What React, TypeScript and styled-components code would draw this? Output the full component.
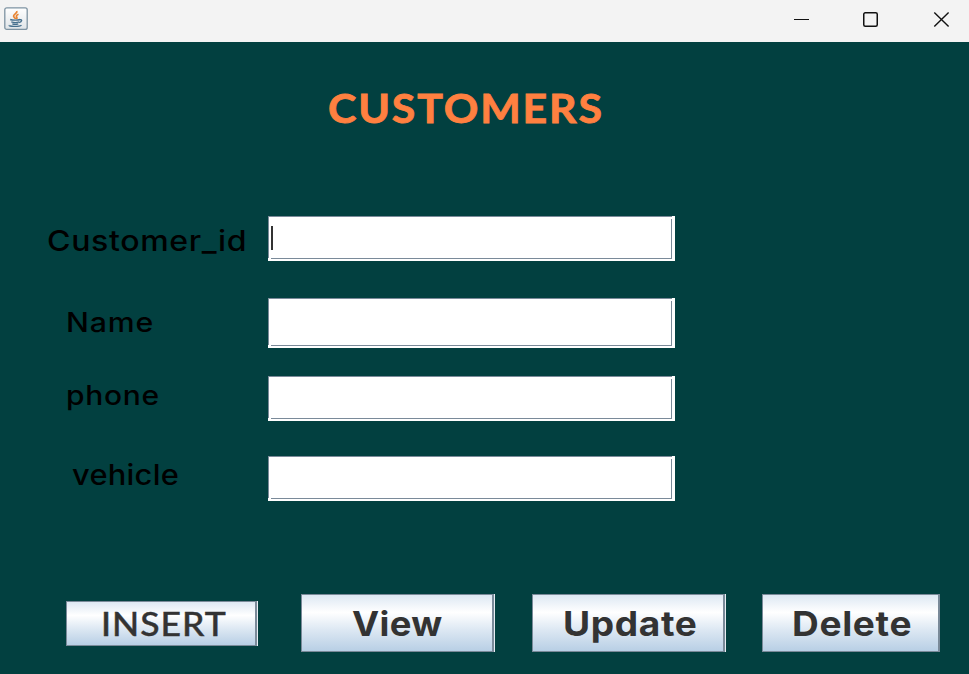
import React from 'react';
import styled, { createGlobalStyle } from 'styled-components';

const GlobalStyle = createGlobalStyle`
  * { box-sizing: border-box; }
  body { margin: 0; background: #024040; overflow: hidden; }
`;

const Window = styled.div`
  width: 969px;
  height: 674px;
  display: flex;
  flex-direction: column;
  background: #024040;
`;

const TitleBar = styled.header`
  height: 42px;
  flex: none;
  display: flex;
  justify-content: space-between;
  background: #f3f3f3;
`;

const AppIcon = styled.svg`
  width: 24px;
  height: 24px;
  margin: 7px 0 0 4px;
`;

const WindowControls = styled.div`
  display: flex;
  gap: 54px;
  padding: 11px 20px 0 0;
`;

const ControlIcon = styled.svg`
  width: 16px;
  height: 17px;
  overflow: visible;
  fill: none;
  stroke: #111;
`;

const Body = styled.main`
  flex: 1;
  display: flex;
  flex-direction: column;
`;

interface TypeProps {
  $size: number;
  $spacing: number;
  $stretch: number;
}

const Type = styled.span<TypeProps>`
  display: inline-block;
  white-space: nowrap;
  font-size: ${p => p.$size}px;
  letter-spacing: ${p => p.$spacing}px;
  transform: scaleX(${p => p.$stretch});
  transform-origin: left center;
`;

const Heading = styled.h1`
  height: 60px;
  margin: 36px 0 0 327.5px;
  font: 700 40px/60px Lato, sans-serif;
  color: #ff8040;
  -webkit-text-stroke: 0.8px #ff8040;
`;

const Form = styled.form`
  display: flex;
  flex-direction: column;
  margin-top: 78px;
`;

const FormRow = styled.div<{ $gap: number }>`
  display: grid;
  grid-template-columns: 268px 407px;
  align-items: start;
  margin-bottom: ${p => p.$gap}px;
`;

const Label = styled.label<{ $indent: number; $drop: number }>`
  padding-left: ${p => p.$indent}px;
  margin-top: ${p => p.$drop}px;
  height: 40px;
  font: 450 28px/40px Inter, sans-serif;
  color: #000;
`;

const Field = styled.div<{ $height: number }>`
  height: ${p => p.$height}px;
  display: grid;
  grid-template-columns: 1px 2px 1fr 1px 3px;
  grid-template-rows: 1px 2px 1fr 1px 2px;
  background: #fff;
`;

const TopEdge = styled.i`
  grid-area: 1 / 1 / 2 / 5;
  background: #7a8a99;
`;
const LeftEdge = styled.i`
  grid-area: 1 / 1 / 4 / 2;
  background: #7a8a99;
`;
const RightEdge = styled.i`
  grid-area: 3 / 4 / 5 / 5;
  background: #7a8a99;
`;
const BottomEdge = styled.i`
  grid-area: 4 / 3 / 5 / 5;
  background: #7a8a99;
`;
const Caret = styled.i`
  grid-area: 3 / 3 / 4 / 4;
  width: 2px;
  height: 24px;
  margin-top: 7px;
  background: #333;
`;

const Actions = styled.div`
  display: flex;
  align-items: center;
  margin: 93px 0 0 66px;
`;

const Button = styled.button<{
  $width: number;
  $height: number;
  $after: number;
  $indent: number;
  $regular?: boolean;
  $flush?: boolean;
}>`
  width: ${p => p.$width}px;
  height: ${p => p.$height}px;
  margin: 0 ${p => p.$after}px 0 0;
  padding: ${p => (p.$regular ? 2 : 8)}px 0 0 ${p => p.$indent}px;
  border: 1px solid #7a8a99;
  border-right-width: 2px;
  border-radius: 0;
  box-shadow: ${p => (p.$flush ? 'none' : '1px 0 0 #e8eef4')};
  background: linear-gradient(#dde8f3 0%, #fff 31%, #dde8f3 62%, #b8cfe5 100%);
  background-clip: padding-box;
  text-align: left;
  color: #333;
  font-family: ${p => (p.$regular ? 'Lato' : 'Inter')}, sans-serif;
  font-weight: ${p => (p.$regular ? 500 : 700)};
  line-height: 40px;
  ${p => p.$regular && '-webkit-text-stroke: 0.4px #333;'}
`;

const rows = [
  { text: 'Customer_id', indent: 46.5, drop: 5, size: 28.5, spacing: 0.55, stretch: 1.125, height: 45, gap: 37 },
  { text: 'Name', indent: 65.5, drop: 4, size: 27, spacing: 0.8, stretch: 1.12, height: 50, gap: 28 },
  { text: 'phone', indent: 65.8, drop: -1, size: 27, spacing: 0.65, stretch: 1.11, height: 45, gap: 35 },
  { text: 'vehicle', indent: 71.5, drop: -1, size: 28, spacing: 0.25, stretch: 1.1, height: 45, gap: 0 },
];

const actions = [
  { text: 'INSERT', width: 191, height: 45, after: 44, indent: 34, size: 32, spacing: 0.9, stretch: 1.11, regular: true },
  { text: 'View', width: 193, height: 58, after: 38, indent: 50, size: 34, spacing: 0.3, stretch: 1.07 },
  { text: 'Update', width: 193, height: 58, after: 37, indent: 30, size: 34, spacing: 0.6, stretch: 1.09 },
  { text: 'Delete', width: 178, height: 58, after: 0, indent: 28.5, size: 34, spacing: 0.6, stretch: 1.09, flush: true },
];

function JavaIcon() {
  return (
    <AppIcon viewBox="0 0 24 24" fill="none">
      <defs>
        <linearGradient id="plate" x1="0" y1="0" x2="0" y2="1">
          <stop offset="0" stopColor="#fff" />
          <stop offset="1" stopColor="#dfe4e8" />
        </linearGradient>
      </defs>
      <rect x="0.8" y="0.8" width="22.4" height="21.6" rx="2" fill="url(#plate)" stroke="#7e93a2" strokeWidth="1.3" />
      <path d="M12.8 4c1 2.3-3.8 3.3-3.2 5.3.2 1 1.6 1.6 1.9 2.7M14.5 7.3c-2.4 1-2.6 2-1.6 3.2.3.5 0 1-.4 1.500" stroke="#e88432" strokeWidth="1.700" />
      <path d="M6.2 12.5c2 .8 7.800.8 9.800 0M7.300 14.9c2 .7 5.900.7 7.900 0M8.300 16.8c1.700.6 4.300.6 6 0M15.800 12.700c2.800-.6 2.200 2.300-.6 2.900M5.500 18.200c-2 1.400 10 1.600 12 0" stroke="#456f8d" strokeWidth="1.400" />
    </AppIcon>
  );
}

export default function App() {
  return (
    <>
      <GlobalStyle />
      <Window>
        <TitleBar>
          <JavaIcon />
          <WindowControls>
            <ControlIcon viewBox="0 0 16 17"><path d="M1 8.5h15" /></ControlIcon>
            <ControlIcon viewBox="0 0 16 17"><rect x="0.75" y="1.75" width="13.5" height="13.5" rx="1.500" strokeWidth="1.500" /></ControlIcon>
            <ControlIcon viewBox="0 0 16 17"><path d="M1.300 1.500l14.300 14M15.600 1.500L1.300 15.500" strokeWidth="1.400" /></ControlIcon>
          </WindowControls>
        </TitleBar>
        <Body>
          <Heading><Type $size={39.5} $spacing={1.7} $stretch={1.085}>CUSTOMERS</Type></Heading>
          <Form>
            {rows.map((r, i) => (
              <FormRow key={r.text} $gap={r.gap}>
                <Label $indent={r.indent} $drop={r.drop}>
                  <Type $size={r.size} $spacing={r.spacing} $stretch={r.stretch}>{r.text}</Type>
                </Label>
                <Field $height={r.height}>
                  <TopEdge /><LeftEdge /><RightEdge /><BottomEdge />
                  {i === 0 && <Caret />}
                </Field>
              </FormRow>
            ))}
          </Form>
          <Actions>
            {actions.map(a => (
              <Button key={a.text} type="button" $width={a.width} $height={a.height} $after={a.after} $indent={a.indent} $regular={a.regular} $flush={a.flush}>
                <Type $size={a.size} $spacing={a.spacing} $stretch={a.stretch}>{a.text}</Type>
              </Button>
            ))}
          </Actions>
        </Body>
      </Window>
    </>
  );
}
